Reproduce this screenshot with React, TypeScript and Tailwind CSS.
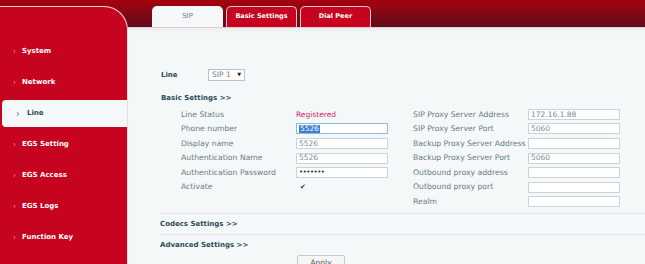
import { ChevronRight } from "lucide-react";

const MENU = ["System", "Network", "Line", "EGS Setting", "EGS Access", "EGS Logs", "Function Key"];

const LEFT_ROWS = [
    { label: "Line Status", kind: "status", value: "Registered" },
    { label: "Phone number", kind: "focus", value: "5526" },
    { label: "Display name", kind: "input", value: "5526" },
    { label: "Authentication Name", kind: "input", value: "5526" },
    { label: "Authentication Password", kind: "password", value: "•••••••" },
    { label: "Activate", kind: "check", value: "" },
];

const RIGHT_ROWS = [
    { label: "SIP Proxy Server Address", value: "172.16.1.88" },
    { label: "SIP Proxy Server Port", value: "5060" },
    { label: "Backup Proxy Server Address", value: "" },
    { label: "Backup Proxy Server Port", value: "5060" },
    { label: "Outbound proxy address", value: "" },
    { label: "Outbound proxy port", value: "" },
    { label: "Realm", value: "" },
];

function Field({ value, focus }: { value: string; focus?: boolean }) {
    return (
        <div
            className={`w-[92px] h-[11px] bg-white border flex items-center pl-[2px] text-[7.5px] leading-none text-[#7d8c94] ${
                focus ? "border-[#8fb8dc]" : "border-[#c9d3d8]"
            }`}
        >
            {focus ? <span className="bg-[#3f7fcf] text-white px-px">{value}</span> : value}
        </div>
    );
}

export default function App() {
    return (
        <div
            className="w-[645px] h-[264px] overflow-hidden flex bg-gradient-to-b from-[#a6000d] to-[#5e0a18] bg-no-repeat bg-[length:100%_28px]"
            style={{ fontFamily: '"DejaVu Sans", Verdana, sans-serif' }}
        >
            {/* sidebar */}
            <div className="w-[128px] shrink-0 pt-[6px]">
                <div className="h-full bg-[#c6041f] rounded-tr-[24px] border-t border-r border-[#f3d6da] pt-[29px]">
                    {MENU.map((item) =>
                        item === "Line" ? (
                            <div
                                key={item}
                                className="ml-[2px] h-[27px] my-[2px] bg-[#f4f8f8] rounded-l-[4px] flex items-center pl-[13px] gap-[6px] text-[#2b4a5a] font-bold text-[7px]"
                            >
                                <ChevronRight size={6} strokeWidth={3} />
                                {item}
                            </div>
                        ) : (
                            <div key={item} className="h-[31px] flex items-center pl-[12px] gap-[5px] text-white font-bold text-[7px]">
                                <ChevronRight size={5} strokeWidth={3} className="text-[#f6c9cf]" />
                                {item}
                            </div>
                        )
                    )}
                </div>
            </div>

            {/* main */}
            <div className="flex-1 flex flex-col">
                <div className="h-[28px] shrink-0 flex items-end pl-[24px] gap-[3px] border-b border-[#e8c8d4]">
                    <div className="w-[71px] h-[21px] bg-[#f4f8f8] rounded-t-[5px] flex items-center justify-center text-[7px] text-[#6c8290]">
                        SIP
                    </div>
                    <div className="w-[71px] h-[21px] bg-[#c6041f] border border-b-0 border-[#f0c4cc] rounded-t-[5px] flex items-center justify-center text-[6.5px] font-bold text-white">
                        Basic Settings
                    </div>
                    <div className="w-[71px] h-[21px] bg-[#c6041f] border border-b-0 border-[#f0c4cc] rounded-t-[5px] flex items-center justify-center text-[6.5px] font-bold text-white">
                        Dial Peer
                    </div>
                </div>

                <div className="flex-1 shrink-0 bg-gradient-to-b from-[#e9eeef] to-[#f4f8f8] bg-no-repeat bg-[length:100%_6px] bg-[#f4f8f8] pl-[33px] pt-[40px]">
                    <div className="flex items-center h-[14px] text-[7px] font-bold text-[#2b4a5a]">
                        <span className="w-[47px]">Line</span>
                        <div className="w-[37px] h-[12px] bg-white border border-[#b9c4ca] flex items-center justify-between px-[3px] font-normal text-[7.5px] text-[#6d7f88]">
                            <span>SIP 1</span>
                            <span className="text-[5px] text-[#222]">▼</span>
                        </div>
                    </div>

                    <div className="mt-[9px] h-[14px] flex items-center text-[7px] font-bold text-[#2b4a5a]">Basic Settings &gt;&gt;</div>

                    <div className="flex pl-[20px] text-[7.7px] text-[#687b85] mt-[2px]">
                        <div className="w-[232px]">
                            {LEFT_ROWS.map((r) => (
                                <div key={r.label} className="h-[14.6px] flex items-center">
                                    <span className="w-[115px]">{r.label}</span>
                                    {r.kind === "status" && <span className="text-[7.5px] text-[#d4246a]">{r.value}</span>}
                                    {r.kind === "focus" && <Field value={r.value} focus />}
                                    {r.kind === "input" && <Field value={r.value} />}
                                    {r.kind === "password" && (
                                        <div className="w-[92px] h-[11px] bg-white border border-[#c9d3d8] flex items-center pl-[2px] text-[7px] tracking-[-0.5px] text-[#2a2a2a]">
                                            {r.value}
                                        </div>
                                    )}
                                    {r.kind === "check" && <span className="ml-[4px] text-[7px] text-[#333]">✔</span>}
                                </div>
                            ))}
                        </div>
                        <div>
                            {RIGHT_ROWS.map((r) => (
                                <div key={r.label} className="h-[14.6px] flex items-center">
                                    <span className="w-[115px] whitespace-nowrap">{r.label}</span>
                                    <Field value={r.value} />
                                </div>
                            ))}
                        </div>
                    </div>

                    <div className="mt-[4px] border-t border-[#dde5e7] h-[21px] flex items-center text-[7px] font-bold text-[#2b4a5a] -ml-px">
                        Codecs Settings &gt;&gt;
                    </div>
                    <div className="border-t border-[#dde5e7] h-[21px] flex items-center text-[7px] font-bold text-[#2b4a5a] -ml-px">
                        Advanced Settings &gt;&gt;
                    </div>
                    <div className="pl-[136px]">
                        <div className="w-[48px] h-[14px] bg-[#f6f6f6] border border-[#c4cbce] rounded-[2px] flex items-center justify-center text-[7.5px] text-[#555]">
                            Apply
                        </div>
                    </div>
                </div>
            </div>
        </div>
    );
}
